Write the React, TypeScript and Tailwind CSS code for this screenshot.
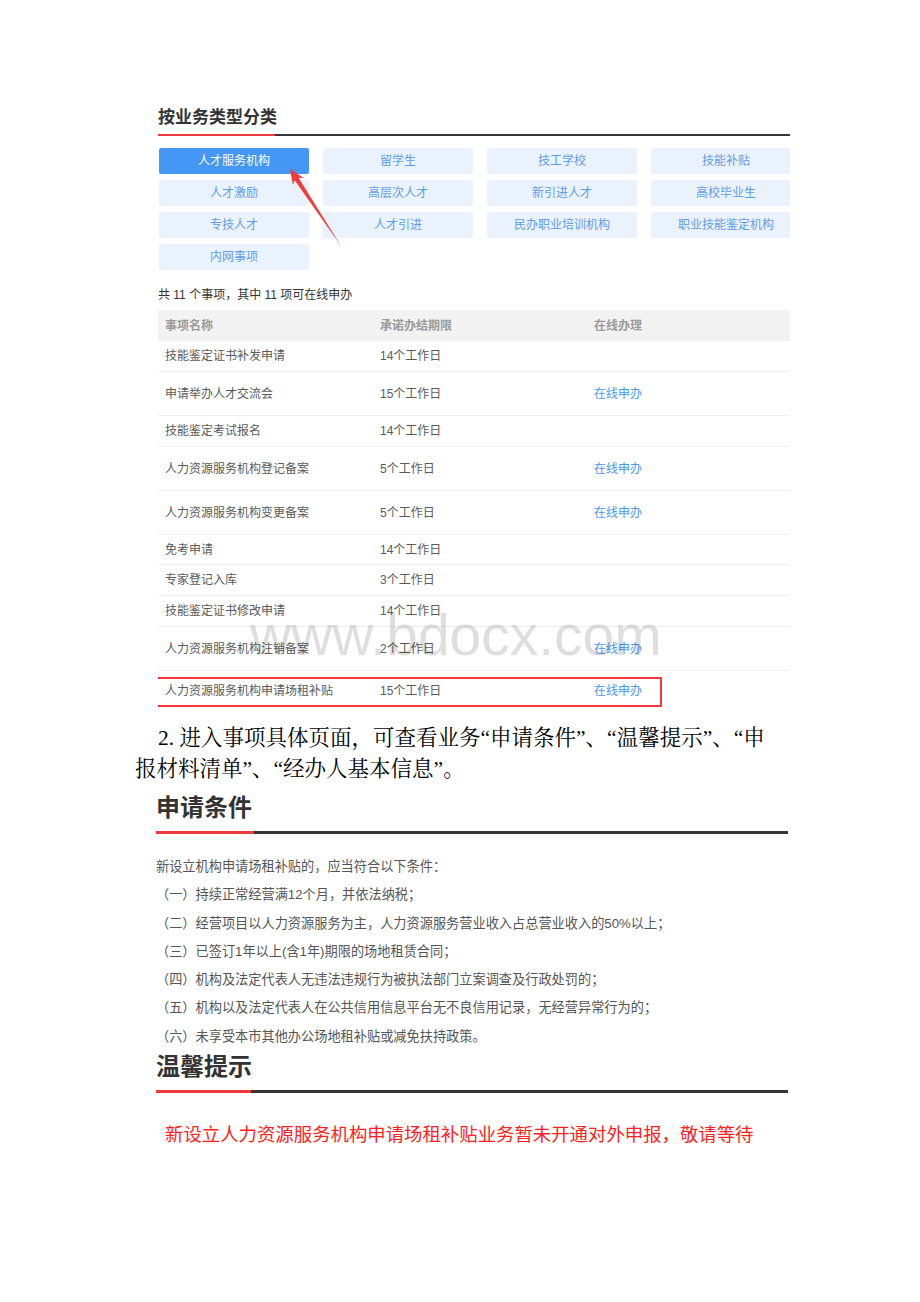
const sans = "font-['Liberation_Sans','Noto_Sans_CJK_SC',sans-serif]";

const categories = [
  "人才服务机构",
  "留学生",
  "技工学校",
  "技能补贴",
  "人才激励",
  "高层次人才",
  "新引进人才",
  "高校毕业生",
  "专技人才",
  "人才引进",
  "民办职业培训机构",
  "职业技能鉴定机构",
  "内网事项",
];

const rows = [
  { name: "技能鉴定证书补发申请", days: "14个工作日", online: false, h: "h-[31px]" },
  { name: "申请举办人才交流会", days: "15个工作日", online: true, h: "h-[44px]" },
  { name: "技能鉴定考试报名", days: "14个工作日", online: false, h: "h-[31px]" },
  { name: "人力资源服务机构登记备案", days: "5个工作日", online: true, h: "h-[44px]" },
  { name: "人力资源服务机构变更备案", days: "5个工作日", online: true, h: "h-[44px]" },
  { name: "免考申请", days: "14个工作日", online: false, h: "h-[30px]" },
  { name: "专家登记入库", days: "3个工作日", online: false, h: "h-[31px]" },
  { name: "技能鉴定证书修改申请", days: "14个工作日", online: false, h: "h-[31px]" },
  { name: "人力资源服务机构注销备案", days: "2个工作日", online: true, h: "h-[44px]" },
];

const conditions = [
  "新设立机构申请场租补贴的，应当符合以下条件：",
  "（一）持续正常经营满12个月，并依法纳税；",
  "（二）经营项目以人力资源服务为主，人力资源服务营业收入占总营业收入的50%以上；",
  "（三）已签订1年以上(含1年)期限的场地租赁合同；",
  "（四）机构及法定代表人无违法违规行为被执法部门立案调查及行政处罚的；",
  "（五）机构以及法定代表人在公共信用信息平台无不良信用记录，无经营异常行为的；",
  "（六）未享受本市其他办公场地租补贴或减免扶持政策。",
];

function Underline({ red, thick }: { red: string; thick: string }) {
  return (
    <div className={`flex ${thick}`}>
      <div className={`${red} bg-[#ee3a3c]`} />
      <div className="flex-1 bg-[#353535]" />
    </div>
  );
}

export default function App() {
  return (
    <div className={`relative w-[920px] min-h-[1302px] bg-white ${sans}`}>
      {/* business type block */}
      <div className="ml-[158px] w-[632px] overflow-hidden pt-[106px]">
        <h2 className="text-[17px] font-bold leading-[24px] text-[#333]">按业务类型分类</h2>
        <div className="mt-[4px] flex h-[2px]">
          <div className="w-[117px] bg-[#ee3a3c]" />
          <div className="flex-1 bg-[#353535]" />
        </div>

        <div className="mt-[12px] grid w-[642px] grid-cols-[repeat(4,150px)] gap-x-[14px] gap-y-[6px] pl-px">
          {categories.map((c, i) => (
            <div
              key={c}
              className={`flex h-[26px] items-center justify-center rounded-[2px] text-[12px] ${
                i === 0 ? "bg-[#4596f5] text-white" : "bg-[#eaf3fd] text-[#5f9de9]"
              }`}
            >
              {c}
            </div>
          ))}
        </div>

        <p className="mt-[16px] text-[12px] leading-[18px] text-[#333]">共 11 个事项，其中 11 项可在线申办</p>

        <div className="mt-[6px] text-[12px]">
          <div className="grid h-[31px] grid-cols-[215px_214px_1fr] items-center bg-[#f2f2f2] pl-[7px] font-bold text-[#9a9a9a]">
            <span>事项名称</span>
            <span>承诺办结期限</span>
            <span>在线办理</span>
          </div>
          {rows.map((r) => (
            <div
              key={r.name}
              className={`grid ${r.h} grid-cols-[215px_214px_1fr] items-center border-b border-[#eeeef3] pl-[7px] text-[#5a5a5a]`}
            >
              <span>{r.name}</span>
              <span>{r.days}</span>
              <span className="text-[#4a96ef]">{r.online ? "在线申办" : ""}</span>
            </div>
          ))}
          <div className="relative grid h-[40px] grid-cols-[215px_214px_1fr] items-center pl-[7px] text-[#5a5a5a]">
            <span>人力资源服务机构申请场租补贴</span>
            <span>15个工作日</span>
            <span className="text-[#4a96ef]">在线申办</span>
            <div className="pointer-events-none absolute left-[-2px] top-[6px] h-[30px] w-[506px] border-2 border-[#f63a3e]" />
          </div>
        </div>
      </div>

      {/* step description */}
      <p className="ml-[135px] mt-[12px] w-[700px] indent-[23px] text-[21.5px] leading-[31px] text-black font-['Liberation_Serif','Noto_Serif_CJK_SC','Noto_Sans_CJK_SC',serif]">
        2. 进入事项具体页面，可查看业务“申请条件”、“温馨提示”、“申
        <br />
        报材料清单”、“经办人基本信息”。
      </p>

      <div className="ml-[156px] w-[632px]">
        <h2 className="mt-[7px] text-[24px] font-bold leading-[32px] text-[#333]">申请条件</h2>
        <div className="mt-[7px]">
          <Underline red="w-[98px]" thick="h-[3px]" />
        </div>
        <div className="mt-[19px] text-[13.2px] leading-[28.3px] text-[#555]">
          {conditions.map((c) => (
            <p key={c}>{c}</p>
          ))}
        </div>

        <h2 className="text-[24px] font-bold leading-[32px] text-[#333]">温馨提示</h2>
        <div className="mt-[7px]">
          <Underline red="w-[95px]" thick="h-[3px]" />
        </div>
        <p className="ml-[9px] mt-[29px] text-[18.4px] leading-[26px] text-[#ff2121]">
          新设立人力资源服务机构申请场租补贴业务暂未开通对外申报，敬请等待
        </p>
      </div>

      {/* red arrow annotation */}
      <svg className="pointer-events-none absolute left-0 top-0" width="920" height="300" viewBox="0 0 920 300">
        <polygon
          points="290,169 292.9,185.1 294.7,180.3 341,246 298.5,177.7 303.7,177.9"
          fill="#f23a3a"
        />
      </svg>

      {/* watermark */}
      <div className="pointer-events-none absolute left-[250px] top-[607px] text-[57px] leading-[57px] text-black/[0.13] font-['Liberation_Sans',sans-serif]">
        www.bdocx.com
      </div>
    </div>
  );
}
